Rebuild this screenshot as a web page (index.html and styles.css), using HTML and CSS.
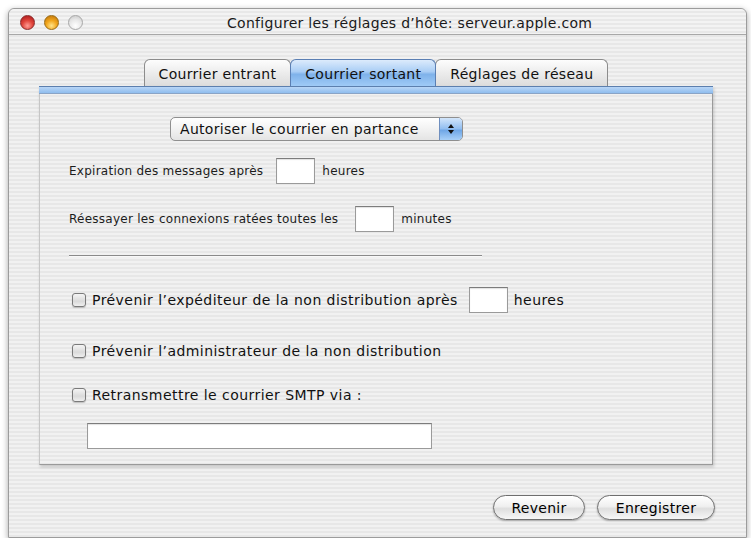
FILE: index.html
```html
<!DOCTYPE html>
<html>
  <head>
    <meta name="viewport" content="width=device-width, initial-scale=1.0" />
    <title>Configurer les réglages d'hôte</title>
    <link rel="stylesheet" href="styles.css">
  </head>

  <body>
    <div class="window">
      <!-- title bar -->
      <div class="titlebar">
        <div class="lights">
          <span class="light red"></span>
          <span class="light yellow"></span>
          <span class="light off"></span>
        </div>
        <div class="title">Configurer les réglages d’hôte: serveur.apple.com</div>
      </div>

      <div class="content">
        <!-- tabs -->
        <div class="tabs">
          <div class="tab">Courrier entrant</div>
          <div class="tab selected">Courrier sortant</div>
          <div class="tab">Réglages de réseau</div>
        </div>

        <div class="panel">
          <div class="strip"></div>
          <div class="panel-body">
            <div class="popup">
              <span class="popup-label">Autoriser le courrier en partance</span>
              <span class="popup-arrows">
                <svg width="8" height="12" viewBox="0 0 8 12">
                  <path d="M4 1 L7 5 L1 5 Z" fill="#111" />
                  <path d="M4 11 L7 7 L1 7 Z" fill="#111" />
                </svg>
              </span>
            </div>

            <div class="row small first">
              <span>Expiration des messages après</span>
              <span class="field short"></span>
              <span>heures</span>
            </div>

            <div class="row small second">
              <span>Réessayer les connexions ratées toutes les</span>
              <span class="field short"></span>
              <span>minutes</span>
            </div>

            <div class="separator"></div>

            <div class="row check cb1">
              <span class="checkbox"></span>
              <span>Prévenir l’expéditeur de la non distribution après</span>
              <span class="field short"></span>
              <span>heures</span>
            </div>

            <div class="row check cb2">
              <span class="checkbox"></span>
              <span>Prévenir l’administrateur de la non distribution</span>
            </div>

            <div class="row check cb3">
              <span class="checkbox"></span>
              <span>Retransmettre le courrier SMTP via :</span>
            </div>

            <div class="field wide"></div>
          </div>
        </div>

        <!-- bottom buttons -->
        <div class="actions">
          <button class="pill revert">Revenir</button>
          <button class="pill save">Enregistrer</button>
        </div>
      </div>
    </div>
  </body>
</html>
```

FILE: styles.css
```css
body {
  margin: 0;
  padding: 0;
  background: #ffffff;
  font-family: "DejaVu Sans", "Liberation Sans", sans-serif;
  color: #111;
}

.window {
  box-sizing: border-box;
  width: 739px;
  height: 530px;
  margin: 8px 0 0 8px;
  border: 1px solid #9c9c9c;
  border-radius: 6px 6px 0 0;
  background: repeating-linear-gradient(to bottom, #f1f1f1 0 2px, #e7e7e7 2px 4px);
  box-shadow: 0 2px 6px rgba(0, 0, 0, 0.35);
  display: flex;
  flex-direction: column;
}

.titlebar {
  height: 25px;
  border-bottom: 1px solid #a8a8a8;
  display: flex;
  align-items: center;
  border-radius: 6px 6px 0 0;
  background: repeating-linear-gradient(to bottom, #f3f3f3 0 2px, #e8e8e8 2px 4px);
}

.lights {
  display: flex;
  gap: 9px;
  margin-left: 11px;
  margin-top: 1px;
}

.light {
  width: 15px;
  height: 15px;
  border-radius: 50%;
  box-sizing: border-box;
}

.light.red {
  background: radial-gradient(circle at 50% 75%, #ff9c94 0, #e0453b 45%, #a4141a 100%);
  border: 1px solid #8a2a2a;
}

.light.yellow {
  background: radial-gradient(circle at 50% 75%, #ffe48a 0, #f2a61c 45%, #b86f08 100%);
  border: 1px solid #9a6a12;
}

.light.off {
  background: radial-gradient(circle at 50% 75%, #ffffff 0, #e6e6e6 55%, #c4c4c4 100%);
  border: 1px solid #a8a8a8;
}

.title {
  margin-left: 144px;
  margin-top: 2px;
  font-size: 14px;
  letter-spacing: 0.3px;
  color: #1a1a1a;
  white-space: nowrap;
}

.content {
  flex: 1;
  display: flex;
  flex-direction: column;
}

.tabs {
  display: flex;
  justify-content: center;
  margin-top: 24px;
  margin-left: -3px;
  height: 27px;
}

.tab {
  box-sizing: border-box;
  height: 27px;
  padding: 6px 14px 0;
  font-size: 14px;
  letter-spacing: 0.3px;
  color: #111;
  border: 1px solid #8c8c8c;
  border-bottom: none;
  border-radius: 6px 6px 0 0;
  background: linear-gradient(to bottom, #fdfdfd 0%, #ececec 50%, #dcdcdc 100%);
  white-space: nowrap;
}

.tab + .tab {
  margin-left: -1px;
}

.tab.selected {
  position: relative;
  border-color: #5b7fb3;
  background: linear-gradient(to bottom, #dcebfc 0%, #a9cdf5 45%, #7fb2ea 55%, #9fcaf6 100%);
}

.panel {
  width: 674px;
  height: 379px;
  margin-left: 30px;
  box-sizing: border-box;
  display: flex;
  flex-direction: column;
  border-left: 1px solid #c6c6c6;
  border-right: 1px solid #9a9a9a;
  border-bottom: 1px solid #9a9a9a;
  box-shadow: 1px 2px 3px rgba(0, 0, 0, 0.18);
}

.strip {
  height: 6px;
  margin: 0 -1px;
  border-top: 1px solid #5c7fae;
  border-bottom: 1px solid #8aa4c6;
  background: linear-gradient(to bottom, #b9d6f7, #8fbdee);
}

.panel-body {
  flex: 1;
  display: flex;
  flex-direction: column;
  align-items: flex-start;
  padding-left: 29px;
}

.popup {
  box-sizing: border-box;
  width: 293px;
  height: 24px;
  margin-top: 23px;
  margin-left: 101px;
  border: 1px solid #8f8f8f;
  border-radius: 5px;
  display: flex;
  align-items: center;
  background: linear-gradient(to bottom, #ffffff 0%, #f2f2f2 50%, #e4e4e4 100%);
  overflow: hidden;
}

.popup-label {
  flex: 1;
  font-size: 14px;
  letter-spacing: 0.3px;
  padding-left: 9px;
  white-space: nowrap;
}

.popup-arrows {
  width: 22px;
  height: 100%;
  display: flex;
  align-items: center;
  justify-content: center;
  border-left: 1px solid #6f8fbf;
  background: linear-gradient(to bottom, #d3e6fb 0%, #90bdf0 50%, #6ea6e6 55%, #a8d0f8 100%);
}

.row {
  display: flex;
  align-items: center;
  white-space: nowrap;
}

.row.small {
  font-size: 12px;
  letter-spacing: 0.25px;
  color: #1c1c1c;
}

.row.small .field {
  margin: 0 7px 0 13px;
}

.row.first {
  margin-top: 17px;
}

.row.second {
  margin-top: 22px;
}

.row.second .field {
  margin-left: 17px;
}

.field {
  box-sizing: border-box;
  background: #fff;
  border: 1px solid #9a9a9a;
  border-top-color: #7c7c7c;
  box-shadow: inset 0 1px 1px rgba(0, 0, 0, 0.12);
}

.field.short {
  width: 39px;
  height: 26px;
}

.separator {
  width: 413px;
  height: 1px;
  margin-top: 23px;
  background: #8a8a8a;
  border-bottom: 1px solid #f8f8f8;
}

.row.check {
  font-size: 14px;
  letter-spacing: 0.45px;
  color: #111;
  margin-left: 3px;
}

.row.check .field {
  margin: 0 6px 0 11px;
}

.checkbox {
  box-sizing: border-box;
  width: 14px;
  height: 14px;
  margin-right: 6px;
  border: 1px solid #7a7a7a;
  border-radius: 3px;
  background: linear-gradient(to bottom, #f4f4f4 0%, #dadada 60%, #efefef 100%);
  box-shadow: 0 1px 1px rgba(0, 0, 0, 0.2);
}

.row.cb1 {
  margin-top: 30px;
}

.row.cb2 {
  margin-top: 30px;
}

.row.cb3 {
  margin-top: 28px;
}

.field.wide {
  width: 345px;
  height: 26px;
  margin-top: 20px;
  margin-left: 18px;
}

.actions {
  display: flex;
  justify-content: flex-end;
  gap: 12px;
  margin-top: 30px;
  margin-right: 31px;
}

.pill {
  box-sizing: border-box;
  height: 25px;
  border: 1px solid #6e6e6e;
  border-radius: 13px;
  font-family: "DejaVu Sans", "Liberation Sans", sans-serif;
  font-size: 14px;
  letter-spacing: 0.3px;
  color: #000;
  background: linear-gradient(to bottom, #ffffff 0%, #f0f0f0 45%, #dedede 55%, #f7f7f7 100%);
  box-shadow: 0 1px 2px rgba(0, 0, 0, 0.3);
  padding: 0;
}

.pill.revert {
  width: 92px;
}

.pill.save {
  width: 118px;
}
```
